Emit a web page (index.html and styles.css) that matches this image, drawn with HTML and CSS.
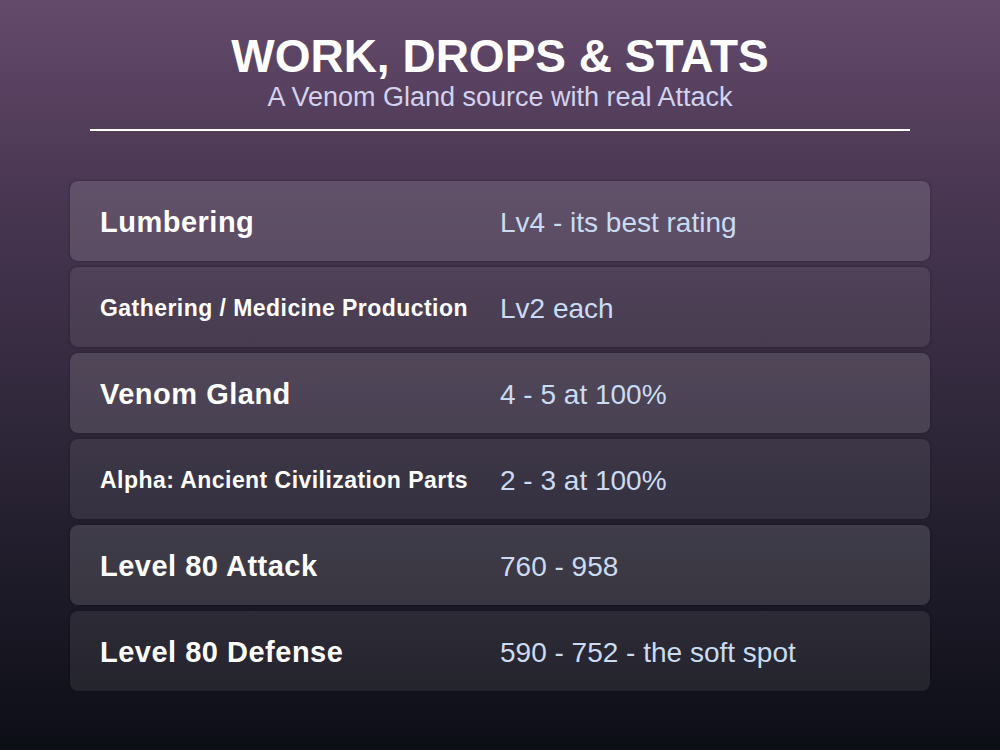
FILE: index.html
```html
<!DOCTYPE html>
<html>
<head>
<meta charset="utf-8">
<link rel="stylesheet" href="styles.css">
</head>
<body>
<div class="page">
  <header class="head">
    <h1 class="title">WORK, DROPS &amp; STATS</h1>
    <p class="subtitle">A Venom Gland source with real Attack</p>
    <div class="rule"></div>
  </header>
  <div class="rows">
    <div class="row row-odd"><span class="label">Lumbering</span><span class="value">Lv4 - its best rating</span></div>
    <div class="row"><span class="label label-small">Gathering / Medicine Production</span><span class="value">Lv2 each</span></div>
    <div class="row row-odd"><span class="label">Venom Gland</span><span class="value">4 - 5 at 100%</span></div>
    <div class="row"><span class="label label-small">Alpha: Ancient Civilization Parts</span><span class="value">2 - 3 at 100%</span></div>
    <div class="row row-odd"><span class="label">Level 80 Attack</span><span class="value">760 - 958</span></div>
    <div class="row"><span class="label">Level 80 Defense</span><span class="value">590 - 752 - the soft spot</span></div>
  </div>
</div>
</body>
</html>
```

FILE: styles.css
```css
html, body {
  margin: 0;
  padding: 0;
}
body {
  width: 1000px;
  height: 750px;
  overflow: hidden;
  background: linear-gradient(180deg, #644a6b 0%, #4a3753 25%, #2c2537 60%, #0c0e16 100%);
  font-family: "Liberation Sans", Arial, sans-serif;
}
.page {
  padding: 30px 70px 0;
}
.head {
  display: flex;
  flex-direction: column;
  align-items: center;
}
.title {
  margin: 0;
  font-size: 46px;
  line-height: 52px;
  font-weight: 700;
  color: #ffffff;
}
.subtitle {
  margin: 0;
  font-size: 27px;
  line-height: 30px;
  color: #d2d3ee;
}
.rule {
  width: 820px;
  height: 2px;
  background: #ffffff;
  margin-top: 17px;
}
.rows {
  margin-top: 50px;
  display: flex;
  flex-direction: column;
  gap: 6px;
}
.row {
  height: 80px;
  box-sizing: border-box;
  padding: 3px 30px 0;
  border-radius: 8px;
  background: rgba(255, 255, 255, 0.08);
  box-shadow: 0 0 3px rgba(0, 0, 0, 0.35);
  display: flex;
  align-items: center;
}
.row-odd {
  background: rgba(255, 255, 255, 0.13);
}
.label {
  width: 400px;
  flex: none;
  color: #ffffff;
  font-weight: 700;
  font-size: 29px;
  letter-spacing: 0.5px;
}
.label-small {
  font-size: 23px;
  letter-spacing: 0.45px;
}
.value {
  color: #c9dcf3;
  font-size: 28px;
}
```
